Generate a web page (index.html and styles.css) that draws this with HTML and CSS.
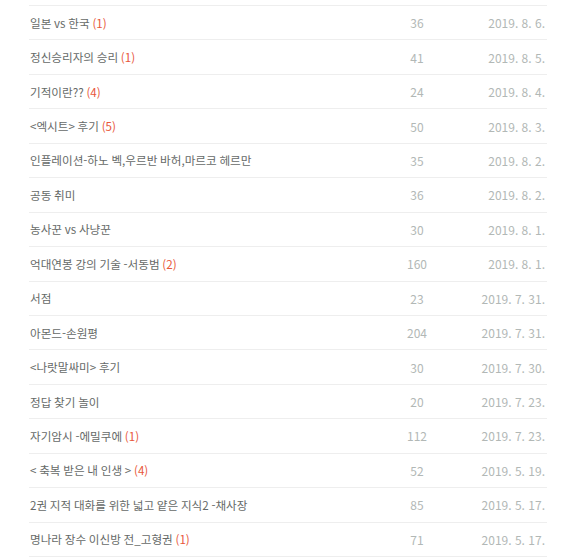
FILE: index.html
```html
<!DOCTYPE html>
<html lang="ko">
<head>
<meta charset="utf-8">
<link rel="stylesheet" href="styles.css">
</head>
<body>
<div class="list">
  <div class="row"><span class="title">일본 vs 한국 <span class="cmt">(1)</span></span><span class="cnt">36</span><span class="date">2019. 8. 6.</span></div>
  <div class="row"><span class="title">정신승리자의 승리 <span class="cmt">(1)</span></span><span class="cnt">41</span><span class="date">2019. 8. 5.</span></div>
  <div class="row"><span class="title">기적이란?? <span class="cmt">(4)</span></span><span class="cnt">24</span><span class="date">2019. 8. 4.</span></div>
  <div class="row"><span class="title">&lt;엑시트&gt; 후기 <span class="cmt">(5)</span></span><span class="cnt">50</span><span class="date">2019. 8. 3.</span></div>
  <div class="row"><span class="title">인플레이션-하노 벡,우르반 바허,마르코 헤르만</span><span class="cnt">35</span><span class="date">2019. 8. 2.</span></div>
  <div class="row"><span class="title">공동 취미</span><span class="cnt">36</span><span class="date">2019. 8. 2.</span></div>
  <div class="row"><span class="title">농사꾼 vs 사냥꾼</span><span class="cnt">30</span><span class="date">2019. 8. 1.</span></div>
  <div class="row"><span class="title">억대연봉 강의 기술 -서동범 <span class="cmt">(2)</span></span><span class="cnt">160</span><span class="date">2019. 8. 1.</span></div>
  <div class="row"><span class="title">서점</span><span class="cnt">23</span><span class="date">2019. 7. 31.</span></div>
  <div class="row"><span class="title">아몬드-손원평</span><span class="cnt">204</span><span class="date">2019. 7. 31.</span></div>
  <div class="row"><span class="title">&lt;나랏말싸미&gt; 후기</span><span class="cnt">30</span><span class="date">2019. 7. 30.</span></div>
  <div class="row"><span class="title">정답 찾기 놀이</span><span class="cnt">20</span><span class="date">2019. 7. 23.</span></div>
  <div class="row"><span class="title">자기암시 -에밀쿠에 <span class="cmt">(1)</span></span><span class="cnt">112</span><span class="date">2019. 7. 23.</span></div>
  <div class="row"><span class="title">&lt; 축복 받은 내 인생 &gt; <span class="cmt">(4)</span></span><span class="cnt">52</span><span class="date">2019. 5. 19.</span></div>
  <div class="row"><span class="title">2권 지적 대화를 위한 넓고 얕은 지식2 -채사장</span><span class="cnt">85</span><span class="date">2019. 5. 17.</span></div>
  <div class="row"><span class="title">명나라 장수 이신방 전_고형권 <span class="cmt">(1)</span></span><span class="cnt">71</span><span class="date">2019. 5. 17.</span></div>
</div>
</body>
</html>
```
FILE: styles.css
```css
html, body {
  margin: 0;
  padding: 0;
  background: #fff;
}
body {
  font-family: "Noto Sans CJK KR", "Noto Sans", sans-serif;
  font-size: 12px;
}
.list {
  margin: 5px 0 0 29px;
  width: 518px;
  border-top: 1px solid #eeeeee;
}
.row {
  box-sizing: border-box;
  height: 34.44px;
  display: flex;
  align-items: center;
  border-bottom: 1px solid #eeeeee;
  padding-left: 1px;
  padding-right: 2px;
}
.title {
  flex: 1;
  color: #666a68;
  white-space: nowrap;
  font-size: 11.6px;
  word-spacing: -0.5px;
}
.cmt {
  color: #e8573a;
}
.cnt {
  width: 40px;
  text-align: center;
  color: #b2b8b6;
  margin-right: 38px;
}
.date {
  width: 70px;
  text-align: right;
  color: #b2b8b6;
}
```
